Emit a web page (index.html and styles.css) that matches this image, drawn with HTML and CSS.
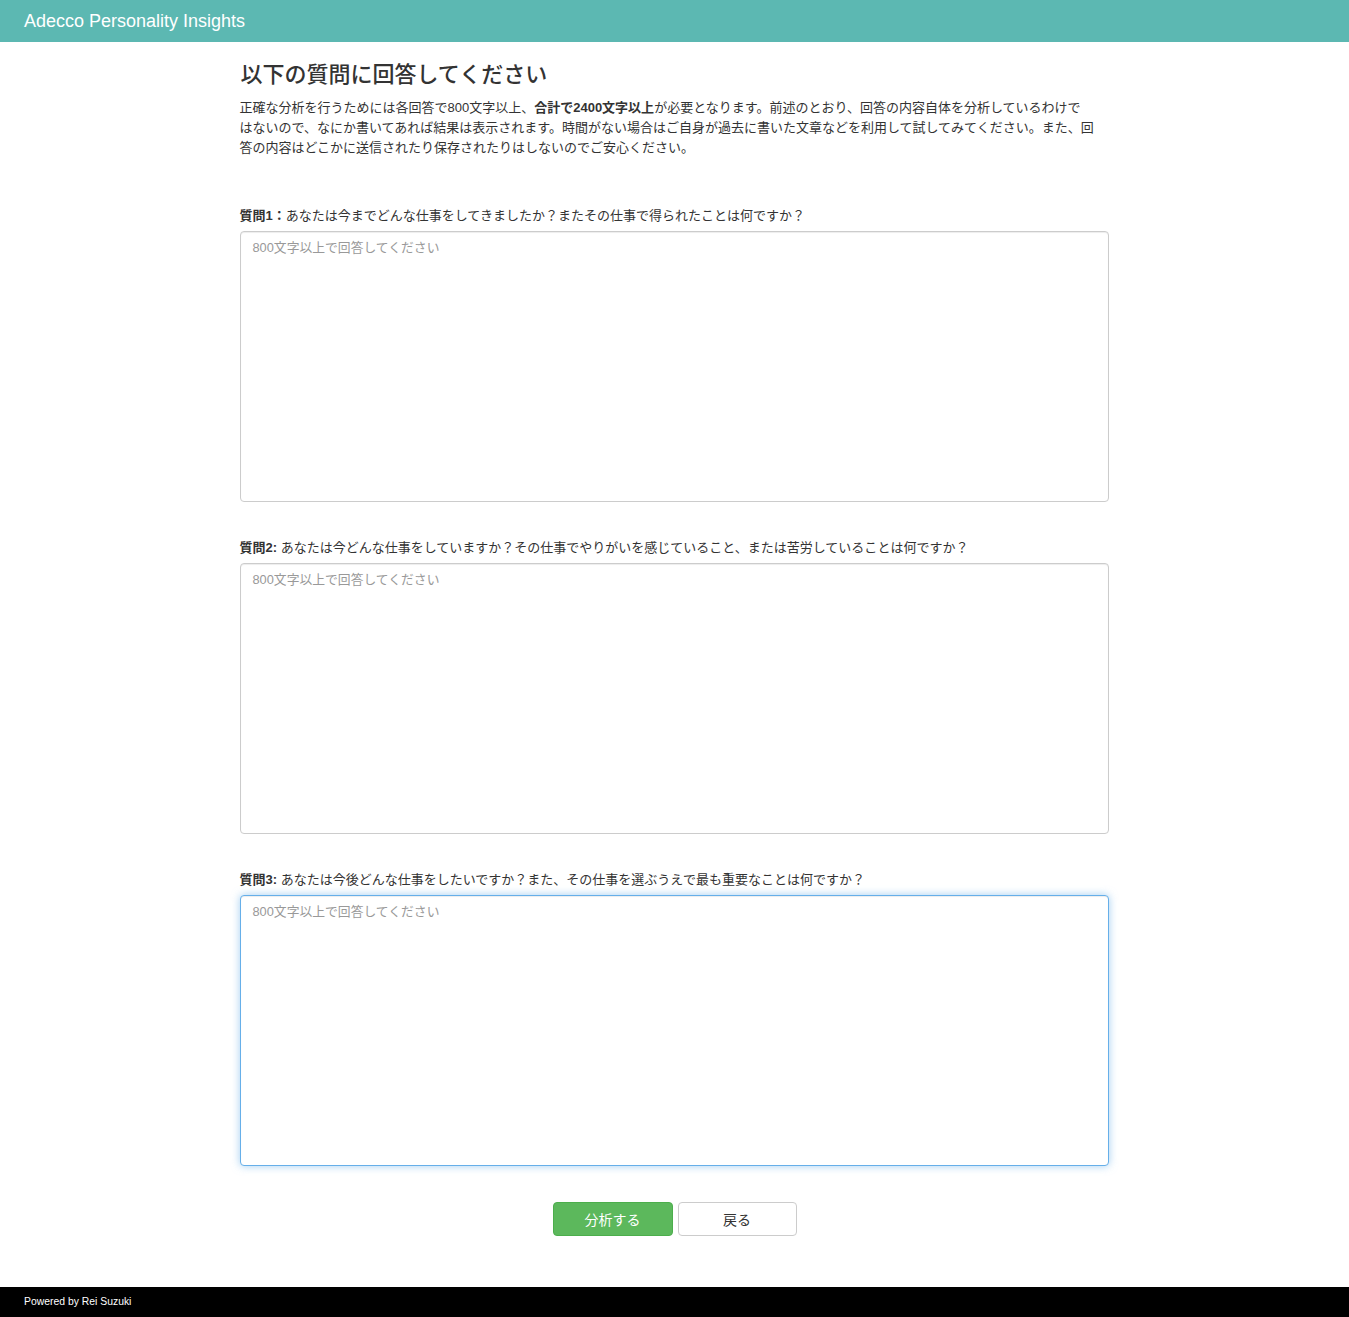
FILE: index.html
```html
<!DOCTYPE html>
<html lang="ja">
<head>
<meta charset="utf-8">
<title>Adecco Personality Insights</title>
<link rel="stylesheet" href="styles.css">
</head>
<body>
<header class="navbar">
  <span class="brand">Adecco Personality Insights</span>
</header>
<main class="container">
  <h3 class="title">以下の質問に回答してください</h3>
  <p class="lead-text">正確な分析を行うためには各回答で800文字以上、<strong>合計で2400文字以上</strong>が必要となります。前述のとおり、回答の内容自体を分析しているわけで<br>はないので、なにか書いてあれば結果は表示されます。時間がない場合はご自身が過去に書いた文章などを利用して試してみてください。また、回<br>答の内容はどこかに送信されたり保存されたりはしないのでご安心ください。</p>
  <form class="qform">
    <div class="form-group">
      <label class="q-label"><strong>質問1：</strong>あなたは今までどんな仕事をしてきましたか？またその仕事で得られたことは何ですか？</label>
      <textarea class="q-text" placeholder="800文字以上で回答してください"></textarea>
    </div>
    <div class="form-group">
      <label class="q-label"><strong>質問2:</strong> あなたは今どんな仕事をしていますか？その仕事でやりがいを感じていること、または苦労していることは何ですか？</label>
      <textarea class="q-text" placeholder="800文字以上で回答してください"></textarea>
    </div>
    <div class="form-group">
      <label class="q-label"><strong>質問3:</strong> あなたは今後どんな仕事をしたいですか？また、その仕事を選ぶうえで最も重要なことは何ですか？</label>
      <textarea class="q-text is-focus" placeholder="800文字以上で回答してください"></textarea>
    </div>
    <div class="actions">
      <button type="button" class="btn btn-success">分析する</button>
      <button type="button" class="btn btn-default">戻る</button>
    </div>
  </form>
</main>
<footer class="footer">
  <span class="powered">Powered by Rei Suzuki</span>
</footer>
</body>
</html>
```

FILE: styles.css
```css
* { box-sizing: border-box; }
html, body { margin: 0; padding: 0; }
body {
  font-family: "Liberation Sans", "Noto Sans CJK JP", Arial, sans-serif;
  color: #333;
  background: #fff;
  font-size: 14px;
  line-height: 20px;
}
.navbar {
  height: 42px;
  background: #5cb8b2;
  display: flex;
  align-items: center;
  padding-left: 24px;
}
.brand {
  color: #fff;
  font-size: 18px;
  line-height: 20px;
}
.container {
  width: 900px;
  margin: 0 auto;
  padding: 0 16px 0 15px;
}
.title {
  margin: 21px 0 11px;
  font-size: 22px;
  line-height: 24px;
  font-weight: 500;
  color: #333;
  padding-left: 1px;
}
.lead-text {
  margin: 0;
  font-size: 13px;
  line-height: 20px;
  white-space: nowrap;
}
.lead-text strong { font-weight: 700; }
.qform { margin-top: 48px; }
.form-group { margin-bottom: 36px; }
.form-group:last-of-type { margin-bottom: 37px; }
.q-label {
  display: block;
  font-size: 13px;
  line-height: 20px;
  margin-bottom: 5px;
}
.q-label strong { font-weight: 700; }
.q-text {
  display: block;
  width: 100%;
  height: 271px;
  padding: 6px 12px;
  font-family: "Liberation Sans", "Noto Sans CJK JP", Arial, sans-serif;
  font-size: 12.8px;
  line-height: 20px;
  color: #555;
  background: #fff;
  border: 1px solid #ccc;
  border-radius: 4px;
  box-shadow: inset 0 1px 1px rgba(0,0,0,.075);
  resize: none;
  outline: none;
}
.q-text::placeholder { color: #999; }
.q-text.is-focus {
  border-color: #66afe9;
  box-shadow: inset 0 1px 1px rgba(0,0,0,.075), 0 0 8px rgba(102,175,233,.6);
}
.actions {
  display: flex;
  justify-content: center;
  gap: 5px;
  padding-left: 1px;
}
.btn {
  width: 120px;
  height: 34px;
  font-family: "Liberation Sans", "Noto Sans CJK JP", Arial, sans-serif;
  font-size: 14px;
  border-radius: 4px;
  border: 1px solid transparent;
  cursor: pointer;
  padding: 0;
}
.btn-default { width: 119px; }
.btn-success {
  background: #5cb85c;
  border-color: #4cae4c;
  color: #fff;
}
.btn-default {
  background: #fff;
  border-color: #ccc;
  color: #333;
}
.footer {
  margin-top: 51px;
  height: 30px;
  background: #000;
  display: flex;
  align-items: center;
  padding-left: 24px;
}
.powered {
  color: #fff;
  font-size: 10.4px;
  line-height: 12px;
}
```
